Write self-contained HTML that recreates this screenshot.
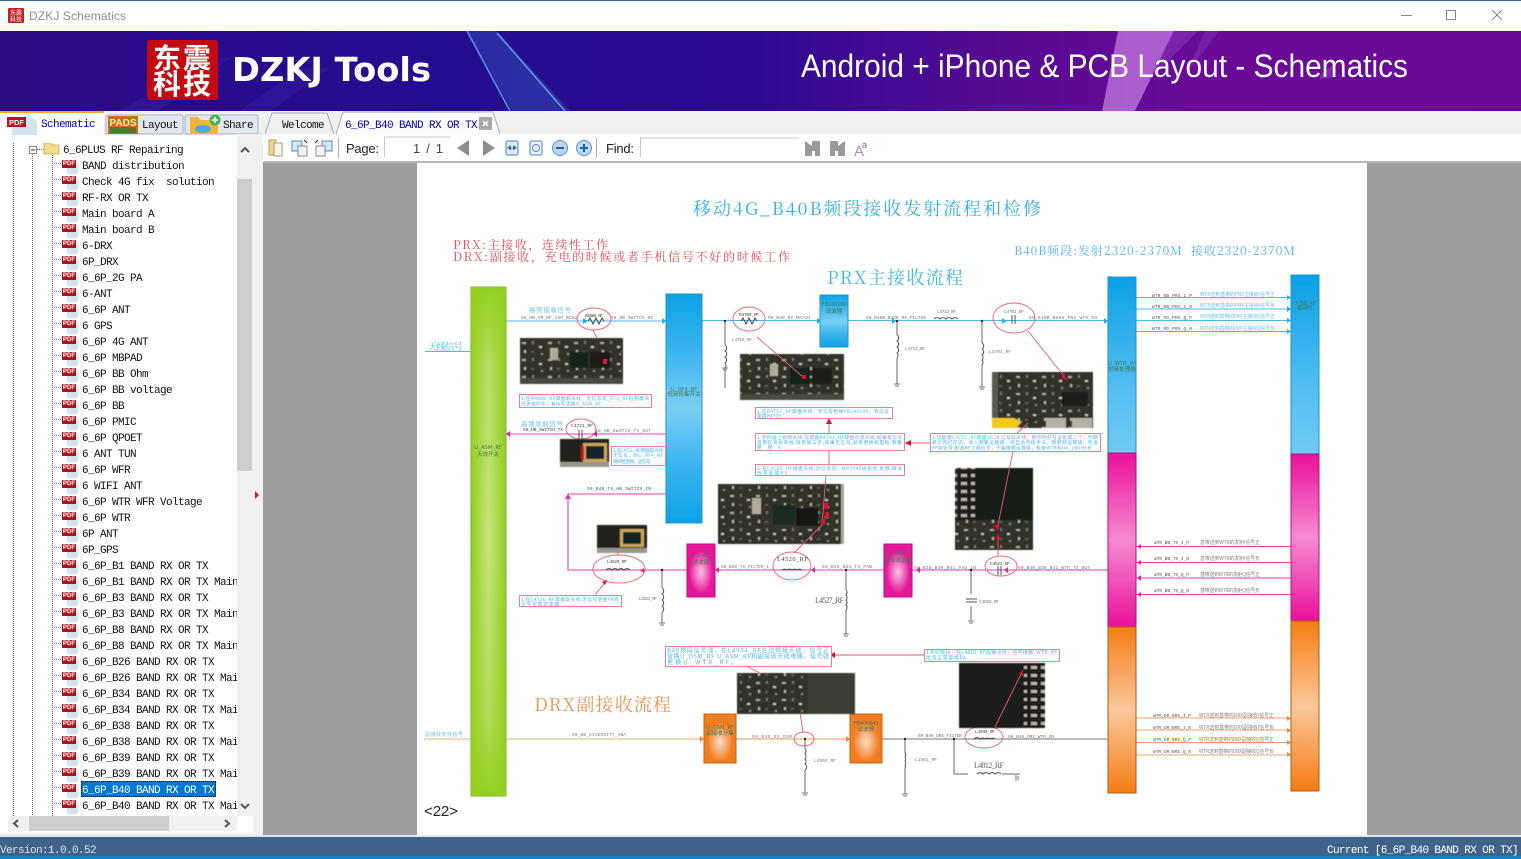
<!DOCTYPE html>
<html><head><meta charset="utf-8"><title>DZKJ Schematics</title>
<style>
html,body{margin:0;padding:0;width:1521px;height:859px;overflow:hidden;background:#f0f0f0;font-family:"Liberation Sans","Noto Sans CJK SC",sans-serif}
#ov{position:absolute;left:0;top:0}
#tree{position:absolute;left:0;top:143px;width:237px;height:673px;overflow:hidden;background:#fff;z-index:0;font:11px/16px "Liberation Mono","Noto Sans CJK SC",monospace;letter-spacing:-.6px;color:#111;white-space:pre}
.r{position:absolute;left:82px;height:16px}
.r b{position:absolute;left:-20px;top:1px;width:14px;height:8px;background:#b3121c;color:#fff;font:bold 6px/8px "Liberation Sans",sans-serif;letter-spacing:0;text-align:center}
.r i{position:absolute;left:-15px;top:9px;width:11px;height:6px;background:#d5e3f0}
.r u{position:absolute;left:-30px;top:4px;width:9px;border-top:1px dotted #777;text-decoration:none}
.s{position:relative;color:#fff;display:inline-block}
.s::before{content:"";position:absolute;left:-1px;top:-2px;width:135px;height:16px;background:#0078d7;outline:1px dotted #111;outline-offset:-1px;z-index:-1}
</style></head><body>
<svg id="ov" width="1521" height="859" viewBox="0 0 1521 859" xmlns="http://www.w3.org/2000/svg">
<defs>
<linearGradient id="ban" x1="0" x2="1" y1="0" y2="0"><stop offset="0" stop-color="#2d0a86"/><stop offset=".3" stop-color="#240c90"/><stop offset=".5" stop-color="#2c0a90"/><stop offset=".65" stop-color="#560a94"/><stop offset=".8" stop-color="#6b0a98"/><stop offset="1" stop-color="#690a94"/></linearGradient>
<linearGradient id="gr" x1="0" x2="1" y1="0" y2="0"><stop offset="0" stop-color="#93cf1f"/><stop offset=".5" stop-color="#c6e57e"/><stop offset="1" stop-color="#93cf1f"/></linearGradient>
<linearGradient id="grv" x1="0" x2="0" y1="0" y2="1"><stop offset="0" stop-color="#93cf1f"/><stop offset=".15" stop-color="#93cf1f" stop-opacity=".3"/><stop offset=".5" stop-color="#93cf1f" stop-opacity="0"/><stop offset=".85" stop-color="#93cf1f" stop-opacity=".4"/><stop offset="1" stop-color="#93cf1f"/></linearGradient>
<linearGradient id="bl" x1="0" x2="0" y1="0" y2="1"><stop offset="0" stop-color="#0ea2e6"/><stop offset=".25" stop-color="#38b4ee"/><stop offset=".5" stop-color="#7ccff5"/><stop offset=".75" stop-color="#38b4ee"/><stop offset="1" stop-color="#0ea2e6"/></linearGradient>
<linearGradient id="blb" x1="0" x2="0" y1="0" y2="1"><stop offset="0" stop-color="#0aa0e6"/><stop offset=".6" stop-color="#50bdf0"/><stop offset="1" stop-color="#6fc9f3"/></linearGradient>
<linearGradient id="mg" x1="0" x2="0" y1="0" y2="1"><stop offset="0" stop-color="#e9119a"/><stop offset=".5" stop-color="#f58ad2"/><stop offset="1" stop-color="#e9119a"/></linearGradient>
<linearGradient id="or" x1="0" x2="0" y1="0" y2="1"><stop offset="0" stop-color="#f57c14"/><stop offset=".5" stop-color="#fbc79a"/><stop offset="1" stop-color="#f57c14"/></linearGradient>
<radialGradient id="wh" cx=".5" cy=".5" r=".5"><stop offset="0" stop-color="#fff" stop-opacity=".75"/><stop offset="1" stop-color="#fff" stop-opacity="0"/></radialGradient>
<pattern id="pcb" width="26" height="17" patternUnits="userSpaceOnUse"><rect width="26" height="17" fill="#33312b"/><rect x="2" y="2" width="4" height="2" fill="#a8a69b"/><rect x="12" y="1" width="2" height="3" fill="#77746a"/><rect x="19" y="6" width="3" height="2" fill="#c4c2b8"/><rect x="4" y="10" width="2" height="3" fill="#b4b2a8"/><rect x="11" y="11" width="3" height="2" fill="#5d5a50"/><rect x="21" y="13" width="2" height="2" fill="#8a877a"/></pattern>
<pattern id="pcb2" width="10" height="8" patternUnits="userSpaceOnUse"><rect width="10" height="8" fill="#201f1b"/><rect x="1" y="2" width="6" height="3" fill="#b8b6ac"/></pattern>
<filter id="soft" filterUnits="userSpaceOnUse" x="417" y="163" width="950" height="672"><feGaussianBlur stdDeviation=".35"/></filter>
<filter id="soft2" filterUnits="userSpaceOnUse" x="417" y="163" width="950" height="672"><feGaussianBlur stdDeviation=".6"/></filter>
</defs>

<!-- window -->
<rect width="1521" height="31" fill="#fff"/><rect width="1521" height="1" fill="#3a6a8c"/>
<rect x="8" y="8" width="16" height="15" rx="1" fill="#c22025"/>
<text x="16" y="15" font-size="6" fill="#fff" text-anchor="middle" font-family="Noto Sans CJK SC">东震</text>
<text x="16" y="21.500" font-size="6" fill="#fff" text-anchor="middle" font-family="Noto Sans CJK SC">科技</text>
<text x="29" y="20" font-size="12" fill="#8c8c8c" textLength="97">DZKJ Schematics</text>
<path d="M1401 15.500h11" stroke="#888"/><rect x="1446.500" y="10.500" width="9" height="9" fill="none" stroke="#888"/><path d="M1492 10l10 10M1502 10l-10 10" stroke="#888"/>

<!-- banner -->
<rect y="31" width="1521" height="80" fill="url(#ban)"/>
<path d="M120 111L205 58h25l-72 53z" fill="#3a22b0" opacity=".4"/>
<path d="M240 111L300 68h30l-60 43z" fill="#3a22b0" opacity=".35"/>
<path d="M467 31h30l73 80h-58z" fill="#3a78d0" opacity=".3"/>
<path d="M467 31l43 80M497 33l68 78" stroke="#6fd0e8" stroke-width="1.500" opacity=".7" fill="none"/>
<path d="M1118 31h56l-39 80h-33z" fill="#c47ae0" opacity=".75"/><path d="M1174 31h24l-50 50z" fill="#8a3ab8" opacity=".55"/><path d="M1205 31h14l-34 45z" fill="#8a3ab8" opacity=".4"/>
<path d="M1320 75l13-10 3 12-16 2z" fill="#8a30ac" opacity=".8"/>
<rect x="147" y="40" width="71" height="60" rx="3" fill="#c40a10"/>
<g font-family="Noto Sans CJK SC" font-weight="700" font-size="28" fill="#fff" text-anchor="middle"><text x="167" y="68">东</text><text x="197" y="68">震</text><text x="167" y="94">科</text><text x="197" y="94">技</text></g>
<text x="232" y="81" font-family="DejaVu Sans" font-weight="700" font-size="33" fill="#fff" textLength="199" lengthAdjust="spacingAndGlyphs">DZKJ Tools</text>
<text x="801" y="77" font-size="32" fill="#fff" textLength="607" lengthAdjust="spacingAndGlyphs">Android + iPhone &amp; PCB Layout - Schematics</text>

<!-- left panel -->
<rect y="111" width="263" height="726" fill="#f0f0f0"/>
<rect x="0" y="134" width="253" height="700" fill="#fff"/>
<path d="M0 134H262" stroke="#c8ccd6"/>
<rect x="0" y="112" width="104" height="23" fill="#fff"/><rect x="0" y="111" width="104" height="2" fill="#f5a623"/>
<rect x="106" y="115" width="77" height="19" rx="2" fill="#e3e7f0" stroke="#aab0c0"/>
<rect x="185" y="115" width="73" height="19" rx="2" fill="#e3e7f0" stroke="#aab0c0"/>
<path d="M28 113l9 9v13H12v-8" fill="#d5e4f2"/>
<rect x="7" y="117" width="19" height="10" fill="#b5121b"/><text x="16.500" y="125" font-size="7.500" font-weight="700" fill="#fff" text-anchor="middle">PDF</text>
<text x="41" y="127" font-family="Liberation Mono" font-size="11" letter-spacing="-.6" fill="#0000c0">Schematic</text>
<rect x="108" y="116" width="30" height="18" fill="#c7701a"/><rect x="110" y="127" width="26" height="6" fill="#4a7a3a"/>
<text x="123" y="126" font-size="10" font-weight="700" fill="#f6e9a0" text-anchor="middle">PADS</text>
<text x="142" y="128" font-family="Liberation Mono" font-size="11" letter-spacing="-.6" fill="#111">Layout</text>
<path d="M190 134v-17h8l3 3h17v14z" fill="#f2b53a"/><ellipse cx="203" cy="129" rx="8" ry="4" fill="#4ca6e6"/><circle cx="215" cy="120" r="5.500" fill="#4caf50"/><path d="M212 120h6M215 117v6" stroke="#fff" stroke-width="1.500"/>
<text x="223" y="128" font-family="Liberation Mono" font-size="11" letter-spacing="-.6" fill="#111">Share</text>

<!-- right tabs + toolbar -->
<path d="M265 134l7-21h55l7 21" fill="#f0f0f0" stroke="#a8a8a8"/>
<path d="M336 134l7-22h150l7 22" fill="#fbfbfb" stroke="#a8a8a8"/>
<text x="282" y="128" font-family="Liberation Mono" font-size="11" letter-spacing="-.6" fill="#111">Welcome</text>
<text x="345" y="128" font-family="Liberation Mono" font-size="11" letter-spacing="-.6" fill="#0000c0" textLength="132">6_6P_B40 BAND RX OR TX</text>
<rect x="479" y="117" width="13" height="13" fill="#a8a8a8"/><path d="M483 121l5 5M488 121l-5 5" stroke="#fff" stroke-width="1.500"/>
<rect x="263" y="134" width="1258" height="28" fill="#fff"/>
<rect x="263" y="161" width="1258" height="2" fill="#b8b8b8"/>
<path d="M269 140h7v15h-7z" fill="#f2d58a" stroke="#b99b55"/><rect x="274" y="143" width="8" height="13" fill="#f8f5e8" stroke="#9a9a9a"/>
<rect x="292" y="141" width="10" height="10" fill="#d7e6f5" stroke="#5a88b8"/><rect x="298" y="146" width="9" height="10" fill="#f4f4f4" stroke="#8a8a8a"/><path d="M304 140l3 3" stroke="#222"/>
<rect x="322" y="141" width="10" height="10" fill="#d7e6f5" stroke="#5a88b8"/><rect x="316" y="146" width="9" height="10" fill="#f4f4f4" stroke="#8a8a8a"/><path d="M318 140l-3 3" stroke="#222"/>
<path d="M338.500 138v20" stroke="#b0b0b0"/>
<text x="346" y="153" font-size="13" fill="#222" textLength="33">Page:</text>
<path d="M384.500 157v-20h66" fill="none" stroke="#c8c8c8"/>
<text x="413" y="153" font-size="13" fill="#444" textLength="30" xml:space="preserve">1 / 1</text>
<path d="M469 140v16l-12-8z" fill="#8e8e8e"/><path d="M483 140v16l12-8z" fill="#8e8e8e"/>
<rect x="506" y="141" width="12" height="14" rx="1" fill="#dbe9f7" stroke="#4d87c7"/><path d="M511 148l-3 0 2-2v4zM513 148l3 0-2-2v4z" fill="#2a5d9a" stroke="#2a5d9a"/>
<rect x="530" y="141" width="12" height="14" rx="1" fill="#eef4fb" stroke="#4d87c7"/><circle cx="536" cy="148" r="3.500" fill="none" stroke="#4d87c7"/>
<circle cx="560" cy="148" r="7.500" fill="#bcd8f0" stroke="#5a8fc4"/><path d="M556 148h8" stroke="#1d5ea8" stroke-width="2"/>
<circle cx="584" cy="148" r="7.500" fill="#bcd8f0" stroke="#5a8fc4"/><path d="M580 148h8M584 144v8" stroke="#1d5ea8" stroke-width="2"/>
<path d="M596.500 138v20" stroke="#b0b0b0"/>
<text x="606" y="153" font-size="13" fill="#222" textLength="28">Find:</text>
<path d="M640.500 157v-19h158" fill="none" stroke="#c8c8c8"/>
<path d="M805 141l7 5v-5h3l5-0v15h-5v-5l-3 0v5h-3l-4 0z" fill="#9a9a9a"/>
<path d="M845 141l-7 5v-5h-3l-5 0v15h5v-5l3 0v5h3l4 0z" fill="#9a9a9a"/>
<text x="854" y="156" font-size="15" fill="#a58fd0">A</text><text x="862" y="148" font-size="9" fill="#b0508a">a</text>
<rect x="263" y="163" width="1258" height="672" fill="#9d9d9d"/>
<rect x="253" y="134" width="10" height="703" fill="#f0f0f0"/>
<path d="M255 491l4 4-4 4z" fill="#d02020"/>

<!-- page -->
<rect x="417" y="163" width="950" height="672" fill="#fff"/>

<!-- blocks & photos & wires: softened like the rasterised original -->
<g filter="url(#soft)">
<g font-family="Noto Serif CJK SC,Liberation Serif,serif">
<text x="693" y="215" font-size="18" fill="#36b0e6" textLength="348">移动4G_B40B频段接收发射流程和检修</text>
<text x="453" y="249" font-size="12" fill="#e64a5c" textLength="155">PRX:主接收，连续性工作</text>
<text x="453" y="261" font-size="12" fill="#e64a5c" textLength="337">DRX:副接收，充电的时候或者手机信号不好的时候工作</text>
<text x="1014" y="255" font-size="12" fill="#55b6e8" textLength="281" xml:space="preserve">B40B频段:发射2320-2370M  接收2320-2370M</text>
<text x="827" y="284" font-size="18" fill="#45b8ea" textLength="136">PRX主接收流程</text>
<text x="534" y="711" font-size="18" fill="#ec9455" textLength="137">DRX副接收流程</text>
<text x="428" y="350" font-size="9.500" fill="#55b6e8" textLength="35">天线信号</text>
</g>

<g fill="none" stroke-width="1">
<path d="M425 351.500h46" stroke="#55b6e8"/>
<path d="M506 321h160M702 320.500h118M848 320.500h260" stroke="#4cb8ea"/>
<path d="M506 434h160" stroke="#ee3fb0"/>
<path d="M666 494H568V570h119M715 570h169M912 570h196" stroke="#e53ba8"/>
<path d="M424 739h280" stroke="#f3a870"/><path d="M736 739h114" stroke="#f39555"/><path d="M882 739h226" stroke="#777"/>
<path d="M1136 297.500h155M1136 309h155M1136 320.500h155M1136 331.500h155" stroke="#4cb8ea"/>
<path d="M1136 546.500h155M1136 562.500h155M1136 578h155M1136 594.500h155" stroke="#e53ba8"/>
<path d="M1136 718h155M1136 730h155M1136 742.500h155M1136 755h155" stroke="#f0a070"/>
<path d="M725 321v24M725 368v20M897 321v14M897 358v26M982 321v22M982 365v22M662 570v18M662 612v11M846 570v20M846 610v24M971 570v24M971 606v14M805 739v10M805 770v23M905 739v14M905 768v26M954 739v35h14M1002 774h18" stroke="#666"/>
<path d="M725 345a3.500 3.500 0 0 1 0 6a3.500 3.500 0 0 1 0 6a3.500 3.500 0 0 1 0 6a3.500 3.500 0 0 1 0 5" stroke="#555"/>
<path d="M897 335a3.500 3.500 0 0 1 0 6a3.500 3.500 0 0 1 0 6a3.500 3.500 0 0 1 0 6a3.500 3.500 0 0 1 0 5" stroke="#555"/>
<path d="M982 343a3.500 3.500 0 0 1 0 6a3.500 3.500 0 0 1 0 6a3.500 3.500 0 0 1 0 5a3.500 3.500 0 0 1 0 5" stroke="#555"/>
<path d="M662 588a3.500 3.500 0 0 1 0 6a3.500 3.500 0 0 1 0 6a3.500 3.500 0 0 1 0 6a3.500 3.500 0 0 1 0 6" stroke="#555"/>
<path d="M846 590a3.500 3.500 0 0 1 0 5a3.500 3.500 0 0 1 0 5a3.500 3.500 0 0 1 0 5a3.500 3.500 0 0 1 0 5" stroke="#555"/>
<path d="M805 749a3.500 3.500 0 0 1 0 5a3.500 3.500 0 0 1 0 5a3.500 3.500 0 0 1 0 5a3.500 3.500 0 0 1 0 6" stroke="#555"/>
<path d="M905 753a3.500 3.500 0 0 1 0 4a3.500 3.500 0 0 1 0 4a3.500 3.500 0 0 1 0 4a3.500 3.500 0 0 1 0 3" stroke="#555"/>
<path d="M934 319a4 4 0 0 1 6 0a4 4 0 0 1 6 0a4 4 0 0 1 6 0a4 4 0 0 1 6 0" stroke="#555"/>
<path d="M606 570a4 4 0 0 1 6 0a4 4 0 0 1 6 0a4 4 0 0 1 6 0a4 4 0 0 1 6 0" stroke="#444"/>
<path d="M782 570a4 4 0 0 1 5 0a4 4 0 0 1 5 0a4 4 0 0 1 5 0a4 4 0 0 1 5 0" stroke="#444"/>
<path d="M974 739a4 4 0 0 1 6 0a4 4 0 0 1 5 0a4 4 0 0 1 5 0a4 4 0 0 1 5 0" stroke="#444"/>
<path d="M977 774a4 4 0 0 1 6 0a4 4 0 0 1 6 0a4 4 0 0 1 6 0a4 4 0 0 1 6 0" stroke="#444"/>
<path d="M588 321l2-3 3 6 3-6 3 6 3-6 2 3" stroke="#444"/><path d="M741 321l2-3 3 6 3-6 3 6 3-6 2 3" stroke="#444"/>
<path d="M1012 315v9M1015 315v9" stroke="#555"/><path d="M579 430v9M582 430v9" stroke="#555"/><path d="M998 566v9M1001 566v9" stroke="#555"/><path d="M966 599h11M966 602h11" stroke="#555"/>
<path d="M722 368h6M723 370h4M894 384h6M895 386h4M979 387h6M980 389h4M659 623h6M660 625h4M843 634h6M844 636h4M968 621h6M969 623h4M802 793h6M803 795h4M902 794h6M903 796h4M1016 775v6M1018 776v4" stroke="#777"/>
<g stroke="#ea6a7a">
<ellipse cx="594" cy="319" rx="17" ry="11"/><ellipse cx="749" cy="319" rx="16" ry="12"/><ellipse cx="1014" cy="318" rx="21" ry="15"/>
<ellipse cx="581" cy="429" rx="15" ry="10"/><ellipse cx="619" cy="569" rx="26" ry="14"/><ellipse cx="792" cy="566" rx="19" ry="14"/>
<ellipse cx="1001" cy="566" rx="16" ry="10"/><ellipse cx="804" cy="739" rx="10" ry="7"/><ellipse cx="984" cy="737" rx="19" ry="11"/>
</g>
</g>
<g fill="#222"><circle cx="725" cy="321" r="1.200"/><circle cx="897" cy="321" r="1.200"/><circle cx="982" cy="321" r="1.200"/><circle cx="662" cy="570" r="1.200"/><circle cx="846" cy="570" r="1.200"/><circle cx="971" cy="570" r="1.200"/><circle cx="805" cy="739" r="1.200"/><circle cx="905" cy="739" r="1.200"/><circle cx="954" cy="739" r="1.200"/></g>
<g fill="#29ace6"><path d="M583 318v6l5-3zM662 318v6l4-3zM817 318v6l4-3zM892 318v6l4-3zM1002 318v6l5-3zM1104 318v6l4-3zM1287 295v5l4-2.500zM1287 306v6l4-3zM1287 318v5l4-2.500zM1287 329v5l4-2.500z"/></g>
<g fill="#e0209a"><path d="M510 431v6l-4-3zM597 431v6l-4-3zM568 494l-3 5h6zM644 568v5l-4-2.500zM719 567v6l-4-3zM920 567v6l-4-3zM1008 567v6l-4-3zM1141 544v5l-4-2.500zM1141 560v5l-4-2.500zM1141 575v6l-4-3zM1141 592v5l-4-2.500zM815 567v6l-4-3z"/></g>
<g fill="#ee8a3a"><path d="M700 736v6l4-3zM846 736v6l4-3zM1287 716v5l4-2.500zM1287 728v5l4-2.500zM1287 740v5l4-2.500zM1287 752v5l4-2.500z"/></g>

<rect x="471" y="287" width="35" height="509" fill="url(#gr)" stroke="#7fa83a"/><rect x="471" y="287" width="35" height="509" fill="url(#grv)"/>
<rect x="666" y="294" width="36" height="229" fill="url(#bl)" stroke="#1a96d0"/>
<rect x="820" y="295" width="28" height="52" fill="url(#bl)" stroke="#1a96d0"/>
<rect x="687" y="544" width="28" height="53" fill="#e6149a" stroke="#b81080"/><ellipse cx="701" cy="572" rx="12" ry="22" fill="url(#wh)"/>
<rect x="884" y="544" width="28" height="53" fill="#e6149a" stroke="#b81080"/><ellipse cx="898" cy="572" rx="12" ry="22" fill="url(#wh)"/>
<rect x="704" y="714" width="32" height="49" fill="#f27c20" stroke="#c46010"/><ellipse cx="720" cy="742" rx="13" ry="20" fill="url(#wh)"/>
<rect x="850" y="714" width="32" height="49" fill="#f27c20" stroke="#c46010"/><ellipse cx="866" cy="742" rx="13" ry="20" fill="url(#wh)"/>
<rect x="1108" y="277" width="28" height="176" fill="url(#blb)" stroke="#1a96d0"/><rect x="1108" y="453" width="28" height="174" fill="url(#mg)" stroke="#b81080"/><rect x="1108" y="627" width="28" height="166" fill="url(#or)" stroke="#b05c14"/>
<rect x="1291" y="275" width="28" height="179" fill="url(#blb)" stroke="#1a96d0"/><rect x="1291" y="454" width="28" height="167" fill="url(#mg)" stroke="#b81080"/><rect x="1291" y="621" width="28" height="170" fill="url(#or)" stroke="#b05c14"/>

<g font-family="Noto Sans CJK SC" text-anchor="middle" font-size="5.500" fill="#475">
<text x="488" y="449">U_ASM_RF</text><text x="488" y="456">天线开关</text>
<text x="684" y="391">U_RF4_RF</text><text x="684" y="396">低频段集开关</text>
<text x="834" y="306">FB240109</text><text x="834" y="313">滤波器</text>
<text x="701" y="557">FT_40</text><text x="701" y="564">滤波器</text>
<text x="898" y="555">F_8801</text><text x="898" y="562">前级滤波器</text>
<text x="720" y="729">U_DSM_RF</text><text x="720" y="735">副接收分集</text>
<text x="866" y="725">FB40B841</text><text x="866" y="731">滤波器</text>
<text x="1122" y="365">U_WTR_RF</text><text x="1122" y="371">射频处理器</text>
<text x="1305" y="305">U_BB_RF</text><text x="1305" y="310">基带IC</text>
</g>
</g>

<!-- pcb photos -->
<g filter="url(#soft2)">
<rect x="520" y="338" width="103" height="46" fill="url(#pcb)"/><rect x="570" y="352" width="18" height="16" fill="#17231f"/><rect x="590" y="352" width="20" height="16" fill="#1a1a16"/><rect x="550" y="348" width="8" height="12" fill="#b0ab9c"/><rect x="520" y="378" width="103" height="6" fill="#4a4842"/>
<rect x="740" y="354" width="104" height="46" fill="url(#pcb)"/><rect x="790" y="368" width="20" height="16" fill="#17231f"/><rect x="812" y="368" width="20" height="16" fill="#1a1a16"/><rect x="770" y="364" width="8" height="12" fill="#b0ab9c"/><rect x="740" y="394" width="104" height="6" fill="#4a4842"/>
<rect x="992" y="372" width="101" height="56" fill="url(#pcb)"/><rect x="992" y="372" width="6" height="56" fill="#5a5850"/><path d="M992 428v-10h22l8 4-6 6z" fill="#f2c81f"/><rect x="1062" y="392" width="26" height="14" fill="#1f1f1b"/><rect x="1046" y="418" width="20" height="10" fill="#b5b3a8"/><rect x="1072" y="418" width="20" height="10" fill="#b5b3a8"/>
<rect x="560" y="439" width="49" height="28" fill="#23211d"/><rect x="583" y="443" width="24" height="19" fill="#c9a55a"/><rect x="586" y="446" width="18" height="13" fill="#15202a"/><rect x="560" y="462" width="49" height="5" fill="#9a988e"/><rect x="581" y="446" width="3" height="14" fill="#d01020"/>
<rect x="718" y="484" width="126" height="60" fill="url(#pcb)"/><rect x="773" y="505" width="22" height="20" fill="#1d2a26"/><rect x="796" y="508" width="22" height="18" fill="#181814"/><rect x="841" y="484" width="3" height="60" fill="#aaa89e"/><rect x="752" y="498" width="9" height="16" fill="#b0ab9c"/>
<rect x="955" y="468" width="78" height="82" fill="url(#pcb2)"/><rect x="975" y="468" width="58" height="52" fill="#181a18"/><rect x="955" y="520" width="78" height="30" fill="url(#pcb)"/>
<rect x="597" y="525" width="50" height="28" fill="#23211d"/><rect x="620" y="529" width="24" height="18" fill="#c9a55a"/><rect x="623" y="532" width="18" height="12" fill="#15202a"/><rect x="597" y="548" width="50" height="5" fill="#9a988e"/>
<rect x="737" y="673" width="118" height="41" fill="url(#pcb)"/><rect x="808" y="673" width="47" height="41" fill="#3e3d35"/>
<rect x="959" y="663" width="86" height="65" fill="#1c1e1a"/><rect x="1024" y="664" width="21" height="64" fill="url(#pcb2)"/>
</g>

<g filter="url(#soft)">
<g fill="none" stroke="#e8586c" stroke-width=".9">
<path d="M593 330l4 8M757 337L803 377M1028 331L1067 380M1028 423l-11 10M1013 451L997 530M998 537V556M826 475L822 525L794 553M803 732l-3-19M748 667l12 6M995 727L1023 670M618 555v-3"/>
<path d="M830 655h94M905 443h25M829 433v-15M829 450v14"/>
<path d="M595 595L607 580" stroke="#e05090"/>
</g>
<g fill="#e01038"><path d="M829 418l-3 6h6zM829 450l-3-6h6zM905 443l6-3v6zM830 655l5-3v6zM1067 380l-6-3 3-4zM994 525h6l-3 6zM995 539h6l-3-5zM607 580l-5 2 3 3zM1023 670l-4 4 4 2z"/><path d="M824 503h4v6h-4zM825 512h4v6h-4zM821 519h4v5h-4zM603 359h4v5h-4zM802 375h4v4h-4z"/></g>

<g fill="#fff" stroke="#ee7f90" stroke-width="1">
<rect x="519.500" y="394.500" width="132" height="13"/><rect x="755.500" y="407.500" width="137" height="11"/><rect x="755.500" y="433.500" width="149" height="17"/><rect x="755.500" y="464.500" width="149" height="11"/><rect x="930.500" y="433.500" width="170" height="18"/><rect x="611.500" y="446.500" width="54" height="19"/><rect x="519.500" y="595.500" width="102" height="11"/><rect x="665.500" y="646.500" width="166" height="20"/><rect x="924.500" y="649.500" width="135" height="12"/>
</g>
<g font-family="Noto Sans CJK SC" fill="#50b4e6" font-size="4.800">
<text x="521" y="400" textLength="128">1.在R4688_RF焊盘取天线，无信号测_RF3_RF低频模块</text><text x="521" y="405.500" textLength="80">开关或坏件，有信号更换U_ASM_RF</text>
<text x="757" y="413" textLength="132">1.在R4707_RF焊盘点线，无信号更换FB240109，有信号</text><text x="757" y="417.500" textLength="24">更换R4709</text>
<text x="757" y="439" textLength="145">2.手机插上射频天线,在焊盘R4701_RF焊盘点测天线,如果有信号</text><text x="757" y="444" textLength="145">选用在发射有线,就有第三步,如果无信号,就要更换机电板,要重</text><text x="757" y="449" textLength="24">要用R</text>
<text x="757" y="470" textLength="145">3.在L4120_RF焊盘天线,没信号的，BR3545进系统,系频,再没</text><text x="757" y="474.500" textLength="30">信号更换R4</text>
<text x="932" y="439" textLength="166">1.功能键C4701_RF焊盘1G24 信号取天线，把示例打在该板第二个，判断</text><text x="932" y="444" textLength="166">机示例打在这，进入频繁运算级，把自动内核手法，频频频运算级，检查</text><text x="932" y="449.500" textLength="160">RF射信号,检查RF工频信号，不能搜频运算级，检查WTR和UA_LMU分析</text>
<text x="613" y="452" textLength="50">1.在C4721_RF焊盘取天线</text><text x="613" y="457" textLength="50">无信号，则U_RF4_RF</text><text x="613" y="463" textLength="38">模块检查换，后信号</text>
<text x="521" y="601" textLength="98">1.在L4526_RF焊盘取天线,无信号更换PA有</text><text x="521" y="605.500" textLength="38">信号更换滤波器</text>
</g>
<g font-family="Noto Sans CJK SC" fill="#50b4e6" font-size="6">
<text x="667" y="652.500" textLength="162">B40频段信号强，在L4904_RF左边焊接天线，信号正</text><text x="667" y="658.500" textLength="162">常换U_DSM_RF U_ASM_RF和副接收天线电路，信号强</text><text x="667" y="664.500" textLength="70">更换U_WTR_RF。</text>
<text x="926" y="654" textLength="131" font-size="5">1.B40频段，在L4810_RF焊接点线，信号接触_WTR_RF</text><text x="926" y="659.500" textLength="40" font-size="5">信号正常更换PA</text>
</g>

<g font-family="Liberation Mono,monospace" fill="#777" font-size="4.500">
<text x="521" y="319" textLength="56">50_HB_VM_RF_ASM_MCH2</text><text x="611" y="319" textLength="42">50_HB_SWITCH_RX</text><text x="768" y="319" textLength="42">50_B40_RX_MATCH</text><text x="866" y="319" textLength="60">50_B40B_B38B_RX_FILTER</text><text x="1029" y="319" textLength="68">50_B40B_B565_PRX_WTR_IN</text>
<text x="937" y="313" textLength="19">L4713_RF</text><text x="1004" y="313" textLength="20">C4701_RF</text><text x="585" y="317" textLength="18" fill="#444">R4688_RF</text><text x="739" y="316" textLength="20" fill="#444">R4709_RF</text>
<text x="732" y="341" textLength="20">L4710_RF</text><text x="905" y="350" textLength="20">L4712_RF</text><text x="989" y="353" textLength="22">L4704_RF</text>
<text x="523" y="431" textLength="40" fill="#444">50_HB_SWITCH_TX</text><text x="595" y="432" textLength="56">50_HB_SWITCH_TX_OUT</text><text x="571" y="427" textLength="22" fill="#444">C4721_RF</text>
<text x="587" y="490" textLength="64" fill="#555">50_B40_TX_HB_SWITCH_IN</text>
<text x="607" y="563" textLength="20" fill="#444">L4526_RF</text><text x="639" y="600" textLength="18">L4523_RF</text>
<text x="721" y="568" textLength="48">50_B40_TX_FILTER_1</text><text x="822" y="568" textLength="50">50_B40_B41_TX_PAB</text>
<text x="914" y="569" textLength="62">50_B38_B40_B41_PAU_IN</text><text x="1018" y="569" textLength="72">50_B40_B38_B41_WTR_TX_OUT</text>
<text x="990" y="565" textLength="20" fill="#444">C4523_RF</text><text x="979" y="603" textLength="20">C4592_RF</text>
<text x="572" y="736" textLength="54">50_HB_DIVERSITY_ANA</text><text x="752" y="738" textLength="40">50_B40_RX_DSM</text><text x="918" y="737" textLength="44">50_B40_DRX_FILTER</text><text x="1008" y="738" textLength="46">50_B40_DRX_WTR_IN</text>
<text x="814" y="762" textLength="22">L4904_RF</text><text x="915" y="761" textLength="22">L1502_RF</text><text x="975" y="733" textLength="20" fill="#444">L4930_RF</text>
<text x="1152" y="297" textLength="40" fill="#555">WTR_RB_PRX_I_P</text><text x="1152" y="308" textLength="40" fill="#555">WTR_RB_PRX_I_N</text><text x="1152" y="319" textLength="40" fill="#555">WTR_RD_PRX_Q_P</text><text x="1152" y="330" textLength="40" fill="#555">WTR_RD_PRX_Q_N</text>
<text x="1154" y="544" textLength="35" fill="#555">WTR_BB_TX_I_P</text><text x="1154" y="560" textLength="35" fill="#555">WTR_BB_TX_I_N</text><text x="1154" y="576" textLength="35" fill="#555">WTR_BB_TX_Q_P</text><text x="1154" y="592" textLength="35" fill="#555">WTR_BB_TX_Q_N</text>
<text x="1153" y="717" textLength="38" fill="#555">WTR_DR_BRS_I_P</text><text x="1153" y="729" textLength="38" fill="#555">WTR_DR_BRS_I_N</text><text x="1153" y="741" textLength="38" fill="#555">WTR_DR_BRS_Q_P</text><text x="1153" y="753" textLength="38" fill="#555">WTR_DR_BRS_Q_N</text>
</g>
<g font-family="Noto Sans CJK SC" font-size="5" fill="#6bbfea">
<text x="1200" y="296" textLength="75">WTR送到基带的PRX主接收I信号正</text><text x="1200" y="307" textLength="75">WTR送到基带的PRX主接收I信号负</text><text x="1200" y="318" textLength="75">WTR送到基带的PRX主接收Q信号正</text><text x="1200" y="330" textLength="75">WTR送到基带的PRX主接收Q信号负</text>
<text x="529" y="312" textLength="42" font-size="6.500">高频接收信号</text>
<text x="521" y="426" textLength="42" font-size="6.500">高频发射信号</text>
<text x="425" y="736" textLength="38">副接收天线信号</text>
</g>
<g font-family="Noto Sans CJK SC" font-size="5" fill="#888">
<text x="1200" y="544" textLength="60">基带送到WTR的发射I信号正</text><text x="1200" y="560" textLength="60">基带送到WTR的发射I信号负</text><text x="1200" y="576" textLength="60">基带送到WTR的发射Q信号正</text><text x="1200" y="592" textLength="60">基带送到WTR的发射Q信号负</text>
<text x="1199" y="717" textLength="75">WTR送到基带的DRX副接收I信号正</text><text x="1199" y="729" textLength="75">WTR送到基带的DRX副接收I信号负</text><text x="1199" y="741" textLength="75">WTR送到基带的DRX副接收Q信号正</text><text x="1199" y="753" textLength="75">WTR送到基带的DRX副接收Q信号负</text>
</g>
<g font-family="Liberation Serif,serif" fill="#666" font-size="8">
<text x="815" y="603" textLength="29">L4527_RF</text><text x="974" y="768" textLength="30">L4812_RF</text>
</g>
<g font-family="Liberation Serif,serif" fill="#444" font-size="6.500"><text x="777" y="561" textLength="31">L4520_RF</text></g>
</g>
<text x="424" y="816" font-size="15" fill="#222" textLength="34">&lt;22&gt;</text>

<!-- bottom -->
<rect x="0" y="833" width="253" height="4" fill="#f0f0f0"/>
<rect x="0" y="835" width="1521" height="2" fill="#dfe7f0"/>
<rect x="0" y="837" width="1521" height="19" fill="#3f6389"/>
<rect x="0" y="856" width="1521" height="3" fill="#0e84c8"/>
<text x="0" y="853" font-family="Liberation Mono" font-size="11" letter-spacing="-.6" fill="#d7e0ea">Version:1.0.0.52</text>
<text x="1327" y="853" font-family="Liberation Mono" font-size="11" letter-spacing="-.6" fill="#fff" textLength="191">Current [6_6P_B40 BAND RX OR TX]</text>

<!-- scrollbars -->
<rect x="237" y="134" width="16" height="682" fill="#f0f0f0"/>
<rect x="237" y="179" width="15" height="292" fill="#cdcdcd"/>
<path d="M241 152l4-4 4 4M241 804l4 4 4-4" fill="none" stroke="#555" stroke-width="2"/>
<rect x="8" y="816" width="229" height="15" fill="#f0f0f0"/><rect x="29" y="816" width="140" height="15" fill="#cdcdcd"/>
<path d="M18 820l-4 3.500 4 3.500M225 820l4 3.500-4 3.500" fill="none" stroke="#555" stroke-width="2"/>
</svg>

<div id="tree">
<svg width="80" height="673" style="position:absolute;left:0;top:0"><path d="M13.500 0V673M32.500 11V673M52.500 12V673" stroke="#666" stroke-dasharray="1 1" fill="none"/><path d="M37 6.500h7" stroke="#666" stroke-dasharray="1 1"/><rect x="29.500" y="3.500" width="7" height="7" fill="#fff" stroke="#888"/><path d="M31 7h4" stroke="#333"/><path d="M44 0h6l2 2h7v9H44z" fill="#f3dc8a" stroke="#cdb465"/></svg>
<div class="r" style="left:63px;top:0">6_6PLUS RF Repairing</div>
<div class="r" style="top:16px"><u></u><i></i><b>PDF</b>BAND distribution</div>
<div class="r" style="top:32px"><u></u><i></i><b>PDF</b>Check 4G fix  solution</div>
<div class="r" style="top:48px"><u></u><i></i><b>PDF</b>RF-RX OR TX</div>
<div class="r" style="top:64px"><u></u><i></i><b>PDF</b>Main board A</div>
<div class="r" style="top:80px"><u></u><i></i><b>PDF</b>Main board B</div>
<div class="r" style="top:96px"><u></u><i></i><b>PDF</b>6-DRX</div>
<div class="r" style="top:112px"><u></u><i></i><b>PDF</b>6P_DRX</div>
<div class="r" style="top:128px"><u></u><i></i><b>PDF</b>6_6P_2G PA</div>
<div class="r" style="top:144px"><u></u><i></i><b>PDF</b>6-ANT</div>
<div class="r" style="top:160px"><u></u><i></i><b>PDF</b>6_6P ANT</div>
<div class="r" style="top:176px"><u></u><i></i><b>PDF</b>6 GPS</div>
<div class="r" style="top:192px"><u></u><i></i><b>PDF</b>6_6P 4G ANT</div>
<div class="r" style="top:208px"><u></u><i></i><b>PDF</b>6_6P MBPAD</div>
<div class="r" style="top:224px"><u></u><i></i><b>PDF</b>6_6P BB Ohm</div>
<div class="r" style="top:240px"><u></u><i></i><b>PDF</b>6_6P BB voltage</div>
<div class="r" style="top:256px"><u></u><i></i><b>PDF</b>6_6P BB</div>
<div class="r" style="top:272px"><u></u><i></i><b>PDF</b>6_6P PMIC</div>
<div class="r" style="top:288px"><u></u><i></i><b>PDF</b>6_6P QPOET</div>
<div class="r" style="top:304px"><u></u><i></i><b>PDF</b>6 ANT TUN</div>
<div class="r" style="top:320px"><u></u><i></i><b>PDF</b>6_6P WFR</div>
<div class="r" style="top:336px"><u></u><i></i><b>PDF</b>6 WIFI ANT</div>
<div class="r" style="top:352px"><u></u><i></i><b>PDF</b>6_6P WTR WFR Voltage</div>
<div class="r" style="top:368px"><u></u><i></i><b>PDF</b>6_6P WTR</div>
<div class="r" style="top:384px"><u></u><i></i><b>PDF</b>6P ANT</div>
<div class="r" style="top:400px"><u></u><i></i><b>PDF</b>6P_GPS</div>
<div class="r" style="top:416px"><u></u><i></i><b>PDF</b>6_6P_B1 BAND RX OR TX</div>
<div class="r" style="top:432px"><u></u><i></i><b>PDF</b>6_6P_B1 BAND RX OR TX Main</div>
<div class="r" style="top:448px"><u></u><i></i><b>PDF</b>6_6P_B3 BAND RX OR TX</div>
<div class="r" style="top:464px"><u></u><i></i><b>PDF</b>6_6P_B3 BAND RX OR TX Main</div>
<div class="r" style="top:480px"><u></u><i></i><b>PDF</b>6_6P_B8 BAND RX OR TX</div>
<div class="r" style="top:496px"><u></u><i></i><b>PDF</b>6_6P_B8 BAND RX OR TX Main</div>
<div class="r" style="top:512px"><u></u><i></i><b>PDF</b>6_6P_B26 BAND RX OR TX</div>
<div class="r" style="top:528px"><u></u><i></i><b>PDF</b>6_6P_B26 BAND RX OR TX Main</div>
<div class="r" style="top:544px"><u></u><i></i><b>PDF</b>6_6P_B34 BAND RX OR TX</div>
<div class="r" style="top:560px"><u></u><i></i><b>PDF</b>6_6P_B34 BAND RX OR TX Main</div>
<div class="r" style="top:576px"><u></u><i></i><b>PDF</b>6_6P_B38 BAND RX OR TX</div>
<div class="r" style="top:592px"><u></u><i></i><b>PDF</b>6_6P_B38 BAND RX OR TX Main</div>
<div class="r" style="top:608px"><u></u><i></i><b>PDF</b>6_6P_B39 BAND RX OR TX</div>
<div class="r" style="top:624px"><u></u><i></i><b>PDF</b>6_6P_B39 BAND RX OR TX Main</div>
<div class="r" style="top:640px"><u></u><i></i><b>PDF</b><span class="s">6_6P_B40 BAND RX OR TX</span></div>
<div class="r" style="top:656px"><u></u><i></i><b>PDF</b>6_6P_B40 BAND RX OR TX Main</div>
</div>
</body></html>
